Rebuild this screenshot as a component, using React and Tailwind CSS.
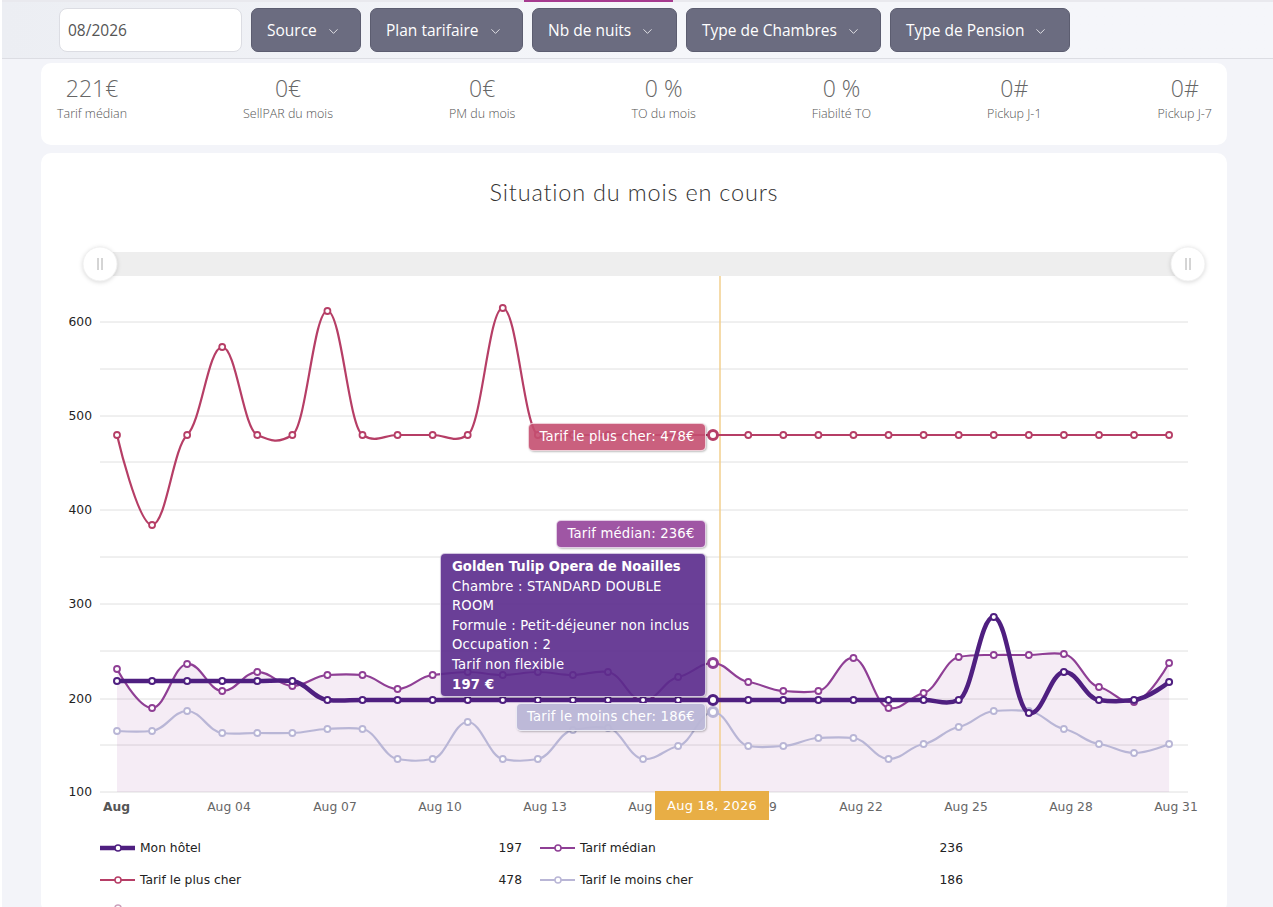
import React from "react";
import { ChevronDown } from "lucide-react";

const filters = [
  { label: "Source", width: "w-[110px]" },
  { label: "Plan tarifaire", width: "w-[153px]" },
  { label: "Nb de nuits", width: "w-[145px]" },
  { label: "Type de Chambres", width: "w-[195px]" },
  { label: "Type de Pension", width: "w-[180px]" },
];

const stats = [
  { value: "221€", label: "Tarif médian" },
  { value: "0€", label: "SellPAR du mois" },
  { value: "0€", label: "PM du mois" },
  { value: "0 %", label: "TO du mois" },
  { value: "0 %", label: "Fiabilté TO" },
  { value: "0#", label: "Pickup J-1" },
  { value: "0#", label: "Pickup J-7" },
];

// series values are read as pixel heights from the chart
const plusCher = [435, 525, 435, 347, 435, 435, 311, 435, 435, 435, 435, 308, 435, 435, 435, 435, 435, 435, 435, 435, 435, 435, 435, 435, 435, 435, 435, 435, 435, 435, 435];
const median = [669, 708, 664, 691, 672, 686, 675, 675, 689, 675, 672, 675, 672, 675, 672, 701, 677, 663, 682, 691, 691, 658, 708, 693, 657, 655, 655, 654, 687, 702, 663];
const hotel = [681, 681, 681, 681, 681, 681, 700, 700, 700, 700, 700, 700, 700, 700, 700, 700, 700, 700, 700, 700, 700, 700, 700, 700, 700, 617, 713, 672, 700, 700, 682];
const moinsCher = [731, 731, 711, 733, 733, 733, 729, 729, 759, 759, 722, 759, 759, 730, 728, 759, 746, 712, 746, 746, 738, 738, 759, 744, 727, 711, 711, 729, 744, 753, 744];

const gridLines = [322, 369, 416, 462, 510, 557, 604, 651, 699, 745, 792];
const yLabels = [
  { y: 322, text: "600" },
  { y: 416, text: "500" },
  { y: 510, text: "400" },
  { y: 604, text: "300" },
  { y: 699, text: "200" },
  { y: 792, text: "100" },
];
const xLabels = [
  { x: 229, text: "Aug 04" },
  { x: 335, text: "Aug 07" },
  { x: 440, text: "Aug 10" },
  { x: 545, text: "Aug 13" },
  { x: 650, text: "Aug 16" },
  { x: 755, text: "Aug 19" },
  { x: 861, text: "Aug 22" },
  { x: 966, text: "Aug 25" },
  { x: 1071, text: "Aug 28" },
  { x: 1176, text: "Aug 31" },
];

const xAt = (i) => 117 + i * 35.07;

// flat handles, tangent follows the two neighbours
function splinePath(values) {
  const handle = (i) => {
    if (i === 0 || i === values.length - 1) return 0;
    return (14 * 0.35 * (values[i + 1] - values[i - 1])) / 70.14;
  };
  let d = `M ${xAt(0)} ${values[0]}`;
  for (let i = 1; i < values.length; i++) {
    const startX = i === 1 ? xAt(0) : xAt(i - 1) + 14;
    const endX = i === values.length - 1 ? xAt(i) : xAt(i) - 14;
    d += ` C ${startX} ${values[i - 1] + handle(i - 1)} ${endX} ${values[i] - handle(i)} ${xAt(i)} ${values[i]}`;
  }
  return d;
}

const Series = ({ values, color, width, hoverY, pointStroke = 1.8 }) => (
  <g>
    <path d={splinePath(values)} fill="none" stroke={color} strokeWidth={width} strokeLinejoin="round" />
    {values.map((y, i) => (
      <circle key={i} cx={xAt(i)} cy={y} r="3" fill="#ffffff" stroke={color} strokeWidth={pointStroke} />
    ))}
    <circle cx="713" cy={hoverY} r="4.5" fill="#ffffff" stroke={color} strokeWidth="3" />
  </g>
);

const Handle = ({ cx }) => (
  <g>
    <circle cx={cx} cy="264" r="17" fill="#ffffff" stroke="#f0f0f0" strokeWidth="1" className="drop-shadow-sm" />
    <line x1={cx - 2} x2={cx - 2} y1="258" y2="270" stroke="#aaaaaa" strokeWidth="1" />
    <line x1={cx + 2} x2={cx + 2} y1="258" y2="270" stroke="#aaaaaa" strokeWidth="1" />
  </g>
);

const Chart = () => (
  <svg width="1186" height="590" viewBox="41 240 1186 590" className="block font-['DejaVu_Sans',sans-serif]">
    <rect x="100" y="252" width="1088" height="24" fill="#eeeeee" />
    <Handle cx={100} />
    <Handle cx={1188} />

    {gridLines.map((y) => (
      <line key={y} x1="100" x2="1188" y1={y} y2={y} stroke="#e0e0e0" strokeWidth="1" />
    ))}
    {yLabels.map((l) => (
      <text key={l.y} x="92" y={l.y + 4} textAnchor="end" fontSize="12.3" fill="#222222">
        {l.text}
      </text>
    ))}

    <path d={`${splinePath(median)} L ${xAt(30)} 792 L ${xAt(0)} 792 Z`} fill="#8b2f8f" fillOpacity="0.09" />
    <line x1="720" x2="720" y1="276" y2="792" stroke="#f2cf8e" strokeWidth="1.5" />

    <Series values={plusCher} color="#b63e66" width={2.2} hoverY={435} />
    <Series values={moinsCher} color="#b9b6d6" width={2.2} hoverY={712} />
    <Series values={median} color="#8f3f95" width={2.2} hoverY={663} />
    <Series values={hotel} color="#4f1f80" width={4.5} hoverY={700} pointStroke={2} />

    <text x="103" y="811" fontSize="12.3" fontWeight="700" fill="#555555">
      Aug
    </text>
    {xLabels.map((l) => (
      <text key={l.x} x={l.x} y="811" textAnchor="middle" fontSize="12.3" fill="#666666">
        {l.text}
      </text>
    ))}
  </svg>
);

const LegendItem = ({ color, thick, name, value, className = "" }) => (
  <div className={`flex items-center h-[32px] ${className}`}>
    <svg width="36" height="12" viewBox="0 0 36 12" className="shrink-0">
      <line x1="0" x2="35" y1="6" y2="6" stroke={color} strokeWidth={thick ? 4.5 : 2} />
      <circle cx="18" cy="6" r="3" fill="#ffffff" stroke={color} strokeWidth="1.5" />
    </svg>
    <span className="ml-[4px] text-[12.3px] text-[#222222]">{name}</span>
    <span className="ml-auto text-[12.3px] text-[#222222]">{value}</span>
  </div>
);

const Tooltip = ({ className, children }) => (
  <div className={`absolute rounded-[5px] shadow-[1px_1px_2px_rgba(0,0,0,0.25)] border border-white/70 text-[13.2px] tracking-[0.2px] text-white font-['DejaVu_Sans',sans-serif] ${className}`}>
    {children}
  </div>
);

export default function App() {
  return (
    <div className="h-[907px] overflow-hidden bg-[#f3f4f9] border-l-2 border-white font-['Open_Sans',sans-serif]">
      <div className="relative h-[59px] border-b border-[#dcdde3] border-t-2 border-t-[#e9e9ee] bg-gradient-to-r from-[#eceef3] via-[#f5f6fa] to-[#f5f6fa]">
        <div className="absolute -top-[2px] left-[522px] w-[149px] h-[2px] bg-[#a63a8f]" />
        <div className="flex gap-[9px] pl-[57px] pt-[6px]">
          <div className="w-[183px] h-[44px] flex items-center pl-[8px] pt-[2px] bg-white border border-[#dcdde3] rounded-[8px] text-[15.5px] text-[#555555]">
            08/2026
          </div>
          {filters.map((f) => (
            <button
              key={f.label}
              className={`${f.width} h-[44px] flex items-center pl-[15px] pt-[2px] bg-[#6b6c80] border border-[#5c5d70] rounded-[7px] text-[15.5px] text-white`}
            >
              {f.label}
              <ChevronDown size={15} strokeWidth={1.25} className="ml-[9px]" />
            </button>
          ))}
        </div>
      </div>

      <div className="ml-[39px] mr-[46px] mt-[4px] h-[82px] bg-white rounded-[10px] flex justify-between pl-[16px] pr-[15px] pt-[11px]">
        {stats.map((s) => (
          <div key={s.label} className="flex flex-col items-center">
            <span className="text-[23px] leading-[28px] font-light text-[#666666]">{s.value}</span>
            <span className="mt-[3px] text-[12.5px] leading-[18px] font-light text-[#555555]">{s.label}</span>
          </div>
        ))}
      </div>

      <div className="relative ml-[39px] mr-[46px] mt-[8px] bg-white rounded-[10px] h-[760px]">
        <h2 className="pt-[23px] h-[87px] text-center text-[23.5px] leading-[32px] font-['Lato',sans-serif] font-light tracking-[0.8px] text-[#333333]">
          Situation du mois en cours
        </h2>
        <Chart />

        <Tooltip className="left-[487px] top-[270px] w-[178px] h-[28px] leading-[25px] text-center bg-[#c44f70]/90">
          Tarif le plus cher: 478€
        </Tooltip>
        <Tooltip className="left-[515px] top-[367px] w-[150px] h-[28px] leading-[26px] text-center bg-[#9a4d9f]/95">
          Tarif médian: 236€
        </Tooltip>
        <Tooltip className="left-[399px] top-[400px] w-[266px] h-[144px] pl-[11px] pr-[10px] pt-[3px] leading-[19.6px] bg-[#5a2a8c]/90">
          <p className="font-bold tracking-normal">Golden Tulip Opera de Noailles</p>
          <p>Chambre : STANDARD DOUBLE ROOM</p>
          <p>Formule : Petit-déjeuner non inclus</p>
          <p>Occupation : 2</p>
          <p>Tarif non flexible</p>
          <p className="font-bold">197 €</p>
        </Tooltip>
        <Tooltip className="left-[475px] top-[550px] w-[190px] h-[28px] leading-[26px] text-center bg-[#b9b6d6]/95">
          Tarif le moins cher: 186€
        </Tooltip>
        <div className="absolute left-[614px] top-[638px] w-[114px] h-[29px] bg-[#e8ae45] text-center leading-[29px] text-[13px] text-white font-['DejaVu_Sans',sans-serif] tracking-[0.2px]">
          Aug 18, 2026
        </div>

        <div className="grid grid-cols-[422px_423px] gap-x-[18px] pl-[59px] pt-[2px] font-['DejaVu_Sans',sans-serif]">
          <LegendItem color="#4f1f80" thick name="Mon hôtel" value="197" />
          <LegendItem color="#8f3f95" name="Tarif médian" value="236" />
          <LegendItem color="#b63e66" name="Tarif le plus cher" value="478" />
          <LegendItem color="#b9b6d6" name="Tarif le moins cher" value="186" />
          <LegendItem color="#c9a0bb" name="" value="" className="-mt-[4px]" />
        </div>
      </div>
    </div>
  );
}
